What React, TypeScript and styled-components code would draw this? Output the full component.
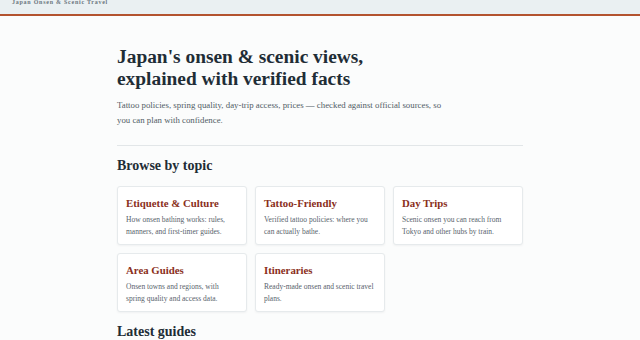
import React from "react";
import styled, { createGlobalStyle } from "styled-components";

const GlobalStyle = createGlobalStyle`
  html, body {
    margin: 0;
    padding: 0;
    background: #fbfcfc;
  }
  body {
    font-family: "Liberation Serif", "DejaVu Serif", serif;
    color: #1f2d36;
  }
`;

type Topic = {
  title: string;
  text: string;
};

const topics: Topic[] = [
  { title: "Etiquette & Culture", text: "How onsen bathing works: rules, manners, and first-timer guides." },
  { title: "Tattoo-Friendly", text: "Verified tattoo policies: where you can actually bathe." },
  { title: "Day Trips", text: "Scenic onsen you can reach from Tokyo and other hubs by train." },
  { title: "Area Guides", text: "Onsen towns and regions, with spring quality and access data." },
  { title: "Itineraries", text: "Ready-made onsen and scenic travel plans." },
];

export default function App() {
  return (
    <>
      <GlobalStyle />
      <SHeader>
        <SBrand>Japan Onsen &amp; Scenic Travel</SBrand>
      </SHeader>
      <SMain>
        <STitle>
          Japan's onsen &amp; scenic views,
          <br />
          explained with verified facts
        </STitle>
        <SLead>
          Tattoo policies, spring quality, day-trip access, prices — checked against official sources, so you can plan with confidence.
        </SLead>
        <SRule />
        <SSection>Browse by topic</SSection>
        <SGrid>
          {topics.map((t) => (
            <SCard key={t.title}>
              <SCardTitle>{t.title}</SCardTitle>
              <SCardText>{t.text}</SCardText>
            </SCard>
          ))}
        </SGrid>
        <SSection>Latest guides</SSection>
      </SMain>
    </>
  );
}

const SHeader = styled.header`
  height: 14px;
  background: #eaf0f2;
  border-bottom: 2px solid #b3532f;
  padding: 0 12px;
  overflow: hidden;
`;

const SBrand = styled.div`
  font-size: 6px;
  line-height: 6px;
  letter-spacing: 0.75px;
  color: #6b767e;
  font-weight: bold;
  margin-top: -1px;
`;

const SMain = styled.main`
  width: 406px;
  margin: 0 auto;
  padding-top: 30px;
`;

const STitle = styled.h1`
  margin: 0;
  font-size: 19.4px;
  line-height: 22px;
  font-weight: bold;
  color: #1f2d36;
`;

const SLead = styled.p`
  margin: 8px 0 0;
  width: 330px;
  font-size: 8.8px;
  line-height: 14.5px;
  color: #525d66;
`;

const SRule = styled.hr`
  margin: 18px 0 0;
  border: 0;
  border-top: 1px solid #e2e6e8;
`;

const SSection = styled.h2`
  margin: 11px 0 0;
  font-size: 14px;
  line-height: 18px;
  font-weight: bold;
  color: #1f2d36;
`;

const SGrid = styled.div`
  display: grid;
  grid-template-columns: repeat(3, 130px);
  gap: 8px;
  margin: 11px 0;
`;

const SCard = styled.div`
  height: 59px;
  box-sizing: border-box;
  background: #ffffff;
  border: 1px solid #e6eaec;
  border-radius: 3px;
  box-shadow: 0 1px 2px rgba(30, 45, 55, 0.05);
  padding: 9px 10px 9px 8px;
`;

const SCardTitle = styled.div`
  font-size: 10.8px;
  line-height: 14px;
  font-weight: bold;
  color: #8a2f1b;
`;

const SCardText = styled.div`
  margin-top: 4px;
  font-size: 7.5px;
  line-height: 12px;
  color: #58636c;
`;
